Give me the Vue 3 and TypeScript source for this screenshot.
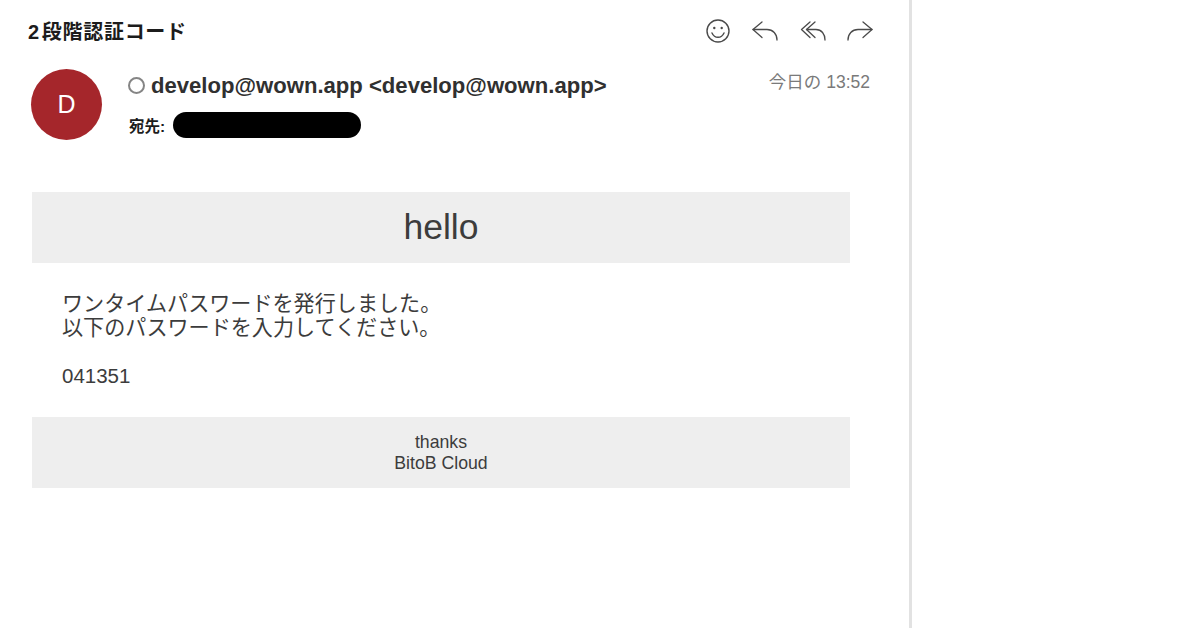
<script setup lang="ts">
const bodyLines: string[] = ['ワンタイムパスワードを発行しました。', '以下のパスワードを入力してください。']
</script>

<template>
  <div class="page">
    <main class="mail">
      <header class="top">
        <h1 class="subject"><span class="num">2</span>段階認証コード</h1>
        <div class="actions">
          <svg width="26" height="26" viewBox="0 0 26 26" fill="none" stroke="#4a4a4a" stroke-width="1.4" stroke-linecap="round">
            <circle cx="13" cy="13" r="11" />
            <circle cx="9.3" cy="10" r="1.2" fill="#4a4a4a" stroke="none" />
            <circle cx="16.700" cy="10" r="1.2" fill="#4a4a4a" stroke="none" />
            <path d="M7 15c1.300 2.900 3.400 4.300 6 4.300s4.700-1.400 6-4.300" />
          </svg>
          <svg width="26" height="22" viewBox="0 0 26 22" fill="none" stroke="#4a4a4a" stroke-width="1.3" stroke-linecap="round" stroke-linejoin="round">
            <path d="M10 2 1 9.500l9 8" />
            <path d="M1 9.500h14c6 0 10 4.500 10 10.500" />
          </svg>
          <svg width="26" height="22" viewBox="0 0 26 22" fill="none" stroke="#4a4a4a" stroke-width="1.3" stroke-linecap="round" stroke-linejoin="round">
            <path d="M10 2 1.500 9.500l8.500 8" />
            <path d="M15 2 6.500 9.500l8.500 8" />
            <path d="M6.500 9.500H16c5.500 0 9 4.500 9 10.500" />
          </svg>
          <svg width="26" height="22" viewBox="0 0 26 22" fill="none" stroke="#4a4a4a" stroke-width="1.3" stroke-linecap="round" stroke-linejoin="round">
            <path d="M16 2l9 7.500-9 8" />
            <path d="M25 9.500H11C5 9.500 1 14 1 20" />
          </svg>
        </div>
      </header>

      <section class="meta">
        <div class="avatar">D</div>
        <div class="who">
          <div class="from">
            <span class="status"></span>
            <span>develop@wown.app &lt;develop@wown.app&gt;</span>
          </div>
          <div class="to">
            <span>宛先:</span>
            <span class="redact"></span>
          </div>
        </div>
        <time class="time">今日の 13:52</time>
      </section>

      <section class="message">
        <div class="banner">hello</div>
        <div class="content">
          <p class="lines">
            <span v-for="line in bodyLines" :key="line" class="line">{{ line }}</span>
          </p>
          <p class="code">041351</p>
        </div>
        <div class="foot">
          <span>thanks</span>
          <span>BitoB Cloud</span>
        </div>
      </section>
    </main>
    <aside class="side"></aside>
  </div>
</template>

<style>
html, body { margin: 0; background: #fff; }
</style>

<style scoped>
.page {
  width: 1200px;
  height: 628px;
  display: flex;
  overflow: hidden;
  background: #fff;
  font-family: "Liberation Sans", "Noto Sans CJK JP", sans-serif;
}
.mail {
  width: 909px;
  flex: none;
  padding: 16px 0 0 0;
  border-right: 3px solid #e2e2e2;
}
.top {
  display: flex;
  align-items: center;
  justify-content: space-between;
  height: 30px;
  padding: 0 36px 0 28px;
}
.subject {
  margin: -2px 0 0;
  font-size: 20px;
  font-weight: 600;
  color: #1c1c1c;
  letter-spacing: 0.7px;
}
.num {
  margin-right: 2px;
}
.actions {
  display: flex;
  align-items: center;
  gap: 21.5px;
}
.meta {
  display: flex;
  align-items: flex-start;
  margin-top: 23px;
  padding: 0 39px 0 31px;
}
.avatar {
  width: 71px;
  height: 71px;
  flex: none;
  border-radius: 50%;
  background: #a5262b;
  color: #fff;
  font-size: 25px;
  display: flex;
  align-items: center;
  justify-content: center;
}
.who {
  flex: 1;
  margin-left: 26px;
}
.from {
  display: flex;
  align-items: center;
  gap: 6px;
  height: 33px;
  font-size: 22.1px;
  font-weight: 700;
  color: #303030;
}
.status {
  width: 13px;
  height: 13px;
  border: 2px solid #858585;
  border-radius: 50%;
}
.to {
  display: flex;
  align-items: center;
  gap: 8px;
  margin-top: 10px;
  padding-left: 1px;
  font-size: 15.5px;
  font-weight: 600;
  color: #1c1c1c;
}
.redact {
  width: 188px;
  height: 26px;
  border-radius: 13px;
  background: #000;
}
.time {
  font-size: 17.5px;
  color: #7a7a7a;
  margin-top: -1px;
}
.message {
  width: 818px;
  margin: 52px 0 0 32px;
  color: #3c3c3c;
}
.banner {
  height: 71px;
  background: #eeeeee;
  display: flex;
  align-items: center;
  justify-content: center;
  font-size: 35.5px;
}
.content {
  padding: 29px 30px 30px;
  font-size: 21.1px;
}
.lines {
  margin: 0;
  line-height: 24px;
}
.line {
  display: block;
}
.code {
  margin: 24px 0 0;
  font-size: 20.5px;
  line-height: 23px;
}
.foot {
  height: 71px;
  background: #eeeeee;
  display: flex;
  flex-direction: column;
  align-items: center;
  justify-content: center;
  font-size: 17.7px;
  line-height: 21px;
}
.side {
  flex: 1;
  background: #fff;
}
</style>
